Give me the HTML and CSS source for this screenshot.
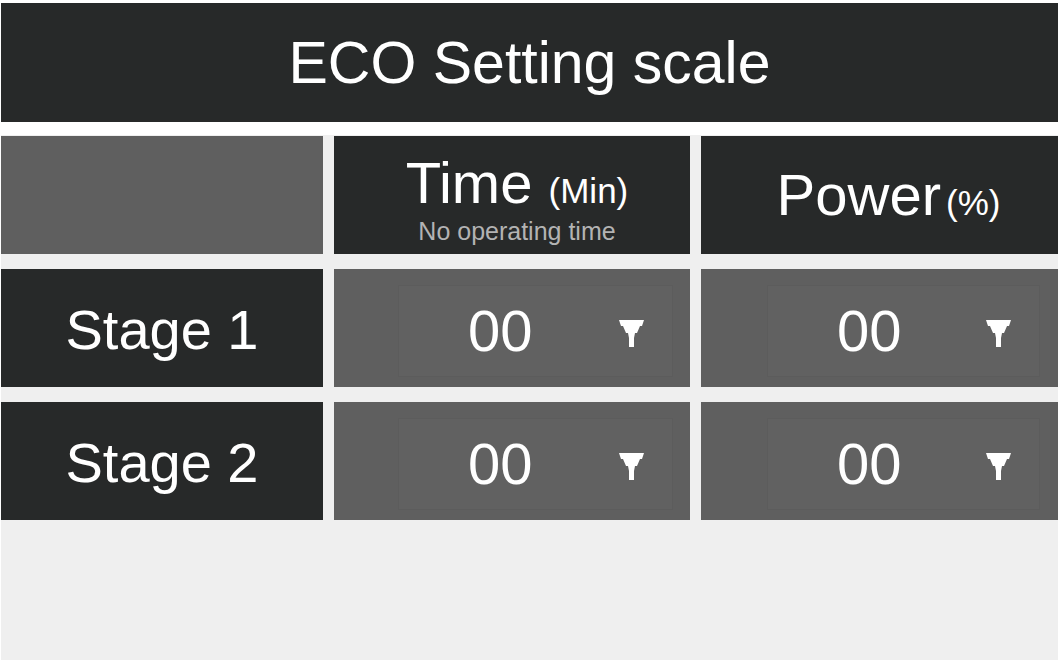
FILE: index.html
```html
<!DOCTYPE html>
<html lang="en">
<head>
    <meta charset="UTF-8">
    <meta name="viewport" content="width=device-width, initial-scale=1.0">
    <title>ECO Setting scale</title>
    <link rel="stylesheet" href="styles.css">
</head>
<body>

<div class="screen">
    <header class="title-bar">ECO Setting scale</header>

    <div class="scale-grid">
        <div class="cell cell-blank"></div>
        <div class="cell cell-head head-time">
            <div class="head-main">Time <span class="unit">(Min)</span></div>
            <div class="head-sub">No operating time</div>
        </div>
        <div class="cell cell-head head-power">
            <div class="head-main">Power<span class="unit unit-tight">(%)</span></div>
        </div>

        <div class="cell cell-stage">Stage 1</div>
        <div class="cell cell-value col-time">
            <div class="picker">
                <span class="picker-value">00</span>
                <svg class="picker-arrow" width="25" height="27" viewBox="0 0 25 27"><path d="M0 0H25L23 6H21L18 13H16L15 18V27H10V18L9 13H7L4 6H2Z" fill="#fff"/></svg>
            </div>
        </div>
        <div class="cell cell-value col-power">
            <div class="picker">
                <span class="picker-value">00</span>
                <svg class="picker-arrow" width="25" height="27" viewBox="0 0 25 27"><path d="M0 0H25L23 6H21L18 13H16L15 18V27H10V18L9 13H7L4 6H2Z" fill="#fff"/></svg>
            </div>
        </div>

        <div class="cell cell-stage">Stage 2</div>
        <div class="cell cell-value col-time">
            <div class="picker">
                <span class="picker-value">00</span>
                <svg class="picker-arrow" width="25" height="27" viewBox="0 0 25 27"><path d="M0 0H25L23 6H21L18 13H16L15 18V27H10V18L9 13H7L4 6H2Z" fill="#fff"/></svg>
            </div>
        </div>
        <div class="cell cell-value col-power">
            <div class="picker">
                <span class="picker-value">00</span>
                <svg class="picker-arrow" width="25" height="27" viewBox="0 0 25 27"><path d="M0 0H25L23 6H21L18 13H16L15 18V27H10V18L9 13H7L4 6H2Z" fill="#fff"/></svg>
            </div>
        </div>
    </div>
</div>

</body>
</html>
```

FILE: styles.css
```css
body {
    margin: 0;
    background-color: #fff;
    font-family: "Liberation Sans", Arial, sans-serif;
    color: #fff;
}
.screen {
    width: 1057px;
    margin-left: 1px;
    padding-top: 3px;
}
.title-bar {
    height: 119px;
    background-color: #272929;
    font-size: 59px;
    line-height: 121px;
    text-align: center;
}
.scale-grid {
    margin-top: 13px;
    padding-top: 1px;
    height: 524px;
    background-color: #efefef;
    display: grid;
    grid-template-columns: 322px 356px 357px;
    grid-auto-rows: 118px;
    column-gap: 11px;
    row-gap: 15px;
    align-content: start;
}
.cell {
    box-sizing: border-box;
}
.cell-blank {
    background-color: #5f5f5f;
}
.cell-head {
    background-color: #272929;
    display: flex;
    flex-direction: column;
    justify-content: center;
    align-items: center;
}
.head-time {
    padding: 8px 0 0 10px;
}
.head-power {
    padding-left: 18px;
}
.head-main {
    font-size: 58px;
    line-height: 1;
}
.unit {
    font-size: 35px;
}
.unit-tight {
    margin-left: 5px;
}
.head-sub {
    margin-top: 7px;
    font-size: 25px;
    line-height: 1;
    color: #b3b3b3;
}
.cell-stage {
    background-color: #272929;
    font-size: 56px;
    display: flex;
    align-items: center;
    justify-content: center;
    padding-top: 2px;
}
.cell-value {
    background-color: #5f5f5f;
    display: flex;
    padding: 16px 17px 10px 64px;
}
.cell-value.col-power {
    padding: 16px 18px 10px 66px;
}
.picker {
    flex: 1;
    display: flex;
    align-items: center;
    padding: 0 28px 0 69px;
    background-color: #616161;
    border: 1px solid #5c5c5c;
}
.picker-value {
    font-size: 58px;
    line-height: 1;
}
.picker-arrow {
    margin-left: auto;
    margin-top: 4px;
}
```
